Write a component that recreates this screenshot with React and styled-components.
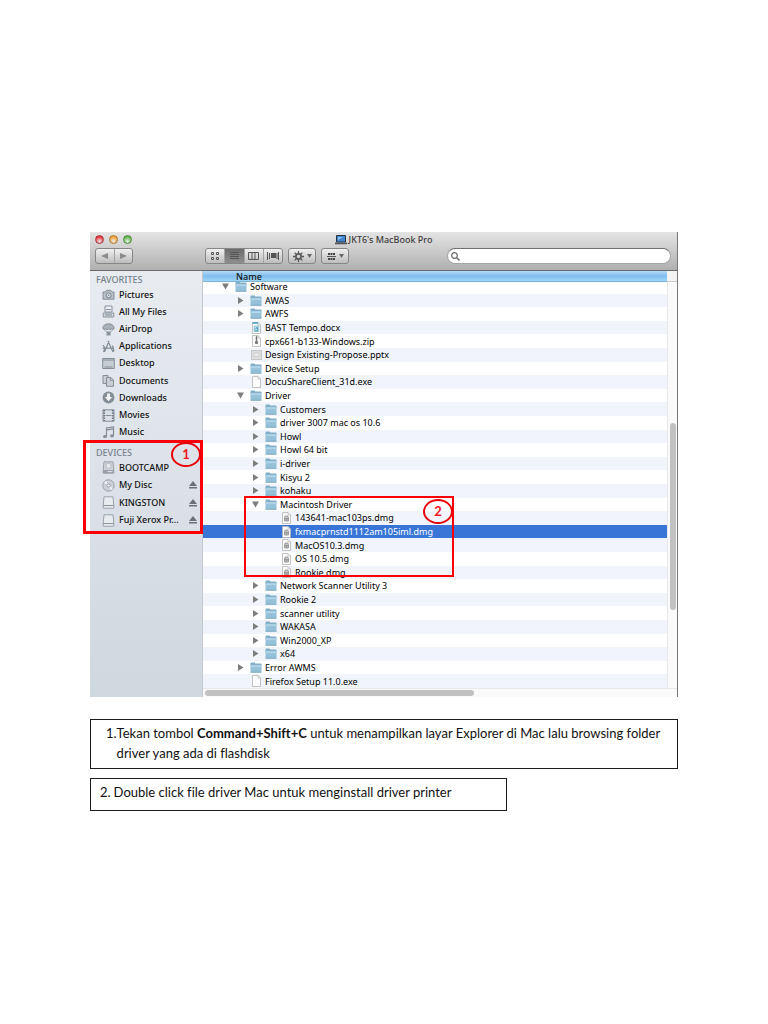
import React from "react";
import styled, { createGlobalStyle, css } from "styled-components";

const Global = createGlobalStyle`
  * { box-sizing: border-box; }
  body { margin: 0; background: #fff; color: #111; font-family: "Noto Sans", sans-serif; }
  button { border: 0; padding: 0; margin: 0; background: none; font: inherit; color: inherit; }
  svg { display: block; flex: none; }
`;

const Page = styled.main`
  padding: 232px 90px 200px;
`;

const Window = styled.section`
  border-right: 1px solid #777;
`;

const Toolbar = styled.header`
  height: 39px;
  padding-bottom: 6px;
  display: flex;
  flex-direction: column;
  justify-content: space-between;
  background: linear-gradient(#e4e4e4, #b0b0b0);
  border-bottom: 1px solid #6b6b6b;
`;

const TitleBar = styled.div`
  display: grid;
  grid-template-columns: 1fr auto 1fr;
  align-items: center;
  height: 15px;
`;

const Lights = styled.div`
  display: flex;
  gap: 5px;
  padding-left: 5px;
`;

const Light = styled.button`
  width: 9px;
  height: 9px;
  border-radius: 50%;
  border: 1px solid ${(p) => p.$edge};
  background: radial-gradient(circle at 50% 75%, #fff8, ${(p) => p.$fill} 70%);
`;

const Title = styled.h1`
  margin: 0;
  display: flex;
  align-items: center;
  gap: 2px;
  font-size: 9px;
  line-height: 14px;
  font-weight: 500;
  color: #3c3c3c;
`;

const Tools = styled.div`
  display: flex;
  align-items: center;
  height: 16px;
  padding: 0 6px 0 5px;
`;

const Group = styled.div`
  display: flex;
  flex: none;
  height: 16px;
  width: ${(p) => p.$w}px;
  margin-right: ${(p) => p.$after}px;
  border: 1px solid #868686;
  border-radius: 3px;
  overflow: hidden;
  background: linear-gradient(#f0f0f0, #bdbdbd);
`;

const Tool = styled.button`
  flex: 1;
  display: flex;
  align-items: center;
  justify-content: center;
  gap: 3px;
  color: #4a4a4a;
  & + & { border-left: 1px solid #a4a4a4; }
  ${(p) => p.$on && css`background: linear-gradient(#6c6c6c, #8e8e8e);`}
`;

const Search = styled.label`
  flex: 1;
  display: flex;
  align-items: center;
  gap: 3px;
  height: 16px;
  padding: 0 3px;
  background: #fff;
  border: 1px solid #a6a6a6;
  border-top-color: #707070;
  border-radius: 8px;
  input { flex: 1; min-width: 0; border: 0; outline: 0; background: none; font-size: 9px; padding: 0; height: 12px; }
`;

const Body = styled.div`
  display: grid;
  grid-template-columns: 113px 1fr;
`;

const Sidebar = styled.nav`
  background: linear-gradient(#e8ecf1, #dadfe7 60%, #cfd7df);
  border-right: 1px solid #c4c8ce;
`;

const Places = styled.section`
  position: relative;
  padding-top: ${(p) => p.$top}px;
`;

const Heading = styled.h2`
  margin: 0;
  padding-left: 6px;
  font-size: 9px;
  line-height: 12px;
  font-weight: 500;
  color: #76808c;
`;

const PlaceList = styled.ul`
  list-style: none;
  margin: 0;
  padding: 0;
  display: grid;
  grid-auto-rows: 1fr;
  min-height: ${(p) => p.$h}px;
`;

const Place = styled.li`
  display: flex;
  align-items: center;
  padding: 0 5px 0 12px;
  a {
    flex: 1;
    display: flex;
    align-items: center;
    gap: 4px;
    font-size: 9px;
    line-height: 14px;
    font-weight: 500;
    color: #111;
    text-decoration: none;
    white-space: nowrap;
  }
`;

const Files = styled.section`
  display: grid;
  grid-template-columns: 1fr 10px;
  grid-template-rows: 11px auto 9px;
`;

const Column = styled.button`
  position: relative;
  z-index: 1;
  padding-left: 33px;
  text-align: left;
  font-size: 9px;
  line-height: 9px;
  font-weight: 500;
  color: #111;
  background: linear-gradient(#b4dcf8, #7fbdec 50%, #9fd6fa);
  border-bottom: 1px solid #80b4d4;
`;

const Corner = styled.div`
  background: #f3f3f3;
  border-bottom: 1px solid #ccc;
`;

const Tree = styled.ul`
  list-style: none;
  margin: -2px 0 0;
  padding: 0;
  display: grid;
  grid-auto-rows: 1fr;
  min-height: 408px;
`;

const Row = styled.li`
  position: relative;
  display: flex;
  align-items: center;
  gap: 3px;
  min-height: 0;
  height: 100%;
  padding-left: ${(p) => 16 + p.$level * 15}px;
  font-size: 9px;
  line-height: 13px;
  font-weight: 400;
  white-space: nowrap;
  color: ${(p) => (p.$selected ? "#fff" : "#000")};
  background: ${(p) => (p.$selected ? "#3875d7" : "#fff")};
  &:nth-child(even) { background: ${(p) => (p.$selected ? "#3875d7" : "#f1f5fb")}; }
`;

const Toggle = styled.span`
  flex: none;
  width: 13px;
  display: flex;
  justify-content: center;
`;

const IconSlot = styled.span`
  flex: none;
  width: 12px;
  display: flex;
  justify-content: center;
`;

const VTrack = styled.div`
  display: flex;
  justify-content: center;
  padding-top: 141px;
  background: #fafafa;
  border-left: 1px solid #e8e8e8;
`;

const VThumb = styled.div`
  width: 6px;
  height: 187px;
  border-radius: 3px;
  background: #c1c1c1;
`;

const HTrack = styled.div`
  grid-column: 1 / -1;
  display: flex;
  align-items: center;
  padding-left: 2px;
  background: #fafafa;
  border-top: 1px solid #e8e8e8;
`;

const HThumb = styled.div`
  width: 57%;
  height: 6px;
  border-radius: 3px;
  background: #c1c1c1;
`;

const Callout = styled.div`
  position: absolute;
  z-index: 2;
  left: ${(p) => p.$left}px;
  top: ${(p) => p.$top}px;
  width: ${(p) => p.$w}px;
  height: ${(p) => p.$h}px;
  border: ${(p) => p.$line}px solid #fb0007;
  pointer-events: none;
`;

const Badge = styled.span`
  position: absolute;
  right: -1px;
  top: ${(p) => p.$top}px;
  width: 30px;
  height: 25px;
  border: 2px solid #e80008;
  border-radius: 50%;
  text-align: center;
  font: 700 13px/21px Lato, sans-serif;
  color: #f0141c;
`;

const Notes = styled.ol`
  list-style: none;
  margin: 22px 0 0;
  padding: 0;
  display: grid;
  gap: 9px;
  font-family: Lato, sans-serif;
  font-size: 13px;
  line-height: 20px;
  font-variant-ligatures: none;
  color: #111;
`;

const Note = styled.li`
  display: flex;
  gap: ${(p) => p.$gap}px;
  width: ${(p) => p.$w};
  min-height: ${(p) => p.$h}px;
  padding: 3px 8px 3px ${(p) => p.$pad}px;
  border: 1px solid #1c1c1c;
  p { margin: 0; }
`;

const Folder = () => (
  <svg width="12" height="11" viewBox="0 0 12 11">
    <path d="M.5 1.300Q.5.500 1.200.5H4.500l.8 1H10.800q.7 0 .7.700V4H.5Z" fill="#7fadc8" />
    <path d="M.5 2.800h11v7.500H.5Z" fill="#94c0d9" />
    <path d="M.5 3.200h11v2H.5Z" fill="#b0d3e5" />
    <path d="M.5 10.300h11" stroke="#6d9db9" strokeWidth=".8" />
  </svg>
);

const Doc = ({ kind }) => (
  <svg width="9" height="12" viewBox="0 0 9 12">
    <path d="M.5.5H6L8.500 3v8.500H.5Z" fill="#fbfbfb" stroke="#b5b5b5" strokeWidth=".8" />
    <path d="M6 .5V3h2.500" fill="#e6e6e6" stroke="#b5b5b5" strokeWidth=".6" />
    {kind === "docx" && (
      <g fill="none" stroke="#3b9dbb">
        <path d="M.5 1H6" strokeWidth="1.400" />
        <path d="M2.200 4h4.600v5.500H2.200Z" strokeWidth=".6" />
        <path d="M3.500 5.300h2V8.500H3.600a.9.900 0 0 1 0-1.800H5.500" strokeWidth=".9" />
      </g>
    )}
    {kind === "zip" && <path d="M4.500 1v5M3.600 2h1.800M3.600 3.500h1.800M3.600 5h1.800M3.500 6.500h2v2h-2Z" stroke="#666" strokeWidth=".8" fill="#888" />}
    {kind === "dmg" && (
      <g fill="none" stroke="#7b7b7b">
        <path d="M2.600 5.500 3.200 4h2.600l.6 1.500V9H2.600Z" fill="#ccc" strokeWidth=".7" />
        <path d="M2.600 6.700h3.800M4 7.900h1.200" strokeWidth=".8" />
      </g>
    )}
  </svg>
);

const Slide = () => (
  <svg width="11" height="10" viewBox="0 0 11 10">
    <rect x=".5" y=".5" width="10" height="9" fill="#dedede" stroke="#c6c6c6" />
    <path d="M3 3h5v3.500H3Z" fill="#ececec" stroke="#c0c0c0" strokeWidth=".6" />
  </svg>
);

const Arrow = ({ open }) => (
  <svg width="7" height="7" viewBox="0 0 7 7" fill="#7d7d7d">
    <path d={open ? "M0 .5h7L3.500 6.500Z" : "M1 0v7L6.500 3.500Z"} />
  </svg>
);

const Caret = () => (
  <svg width="5" height="4" viewBox="0 0 5 4"><path d="M0 0h5L2.500 4Z" fill="#666" /></svg>
);

const Eject = () => (
  <svg width="8" height="8" viewBox="0 0 8 8" fill="#6b7178"><path d="M4 0 8 5H0ZM0 6h8v1.500H0Z" /></svg>
);

const drive = (
  <>
    <path d="M2 .8h9l.8 8.700v2.700H1.200V9.500Z" fill="#e9ecef" stroke="#9ba1a9" />
    <path d="M1.200 9.500h10.600" stroke="#8d949d" />
  </>
);

const placeIcons = {
  Pictures: (
    <>
      <path d="M1 4h2.500l1.200-1.700h4L10 4h2v7.200H1Z" fill="#b9c0c8" stroke="#858d97" />
      <circle cx="6.700" cy="7.300" r="2.400" fill="#dfe4ea" stroke="#79818b" />
      <circle cx="6.700" cy="7.300" r=".8" fill="#79818b" />
    </>
  ),
  "All My Files": (
    <>
      <path d="M3 1h7v6H3Z" fill="#eef0f3" stroke="#8a929c" />
      <path d="M4 4.500h5" stroke="#8a929c" />
      <path d="M1.200 8h10.600v4H1.200Z" fill="#d5dae0" stroke="#8a929c" />
      <path d="M3 10h7" stroke="#8a929c" strokeWidth="1.200" />
    </>
  ),
  AirDrop: (
    <>
      <path d="M.8 5.500C.8 2.500 3.200.8 6.500.8s5.700 1.700 5.700 4.700Q11 7 9.500 6 8 7.300 6.500 6 5 7.300 3.500 6 2 7 .8 5.500Z" fill="#a9b0b9" stroke="#7d858f" strokeWidth=".8" />
      <path d="M2 6.500 5 9.500M11 6.500 8 9.500" stroke="#7d858f" strokeWidth=".7" />
      <path d="M4.500 8.500h4v4h-4Z" fill="#8b939d" />
    </>
  ),
  Applications: (
    <g fill="none" stroke="#858d97" strokeWidth="1.200">
      <path d="M7 1 2.500 12M6 1l5 11M.5 8.200h11.500M1 5l2 3-1.500 4M10.500 5.500l1.500 6" />
    </g>
  ),
  Desktop: (
    <>
      <path d="M.7 1.500h11.600v10H.7Z" fill="#c6ccd3" stroke="#868e98" />
      <path d="M1 3h11M2.500 10h8" stroke="#868e98" strokeWidth="1.200" />
    </>
  ),
  Documents: (
    <g fill="#c9ced5" stroke="#868e98">
      <path d="M1 1.500h5v8H1Z" /><path d="M4.500 3.500H9l2.500 2.500v6.300h-7Z" /><path d="M8.500 3.500v3h3" fill="none" strokeWidth=".8" />
    </g>
  ),
  Downloads: (
    <>
      <circle cx="6.500" cy="6.500" r="5.900" fill="#858d97" />
      <path d="M5 2.500h3V6h2.200L6.500 10.300 2.800 6H5Z" fill="#f1f3f6" />
    </>
  ),
  Movies: (
    <>
      <path d="M1 .8h11v11.400H1Z" fill="#dbe0e6" stroke="#858d97" />
      <path d="M2.200 1v11M10.800 1v11" stroke="#6f7781" strokeWidth="1.800" strokeDasharray="1.500 1" />
      <path d="M3.500 6.500h6" stroke="#858d97" />
    </>
  ),
  Music: (
    <>
      <path d="M4.500 10V2l7-1v8.500M4.500 3.800l7-1" fill="none" stroke="#858d97" strokeWidth="1.200" />
      <ellipse cx="3" cy="10.500" rx="2" ry="1.600" fill="#858d97" /><ellipse cx="10" cy="9.800" rx="2" ry="1.600" fill="#858d97" />
    </>
  ),
  BOOTCAMP: (
    <>
      <path d="M2 .8h9l.8 8.200v3.200H1.200V9Z" fill="#cfd3d8" stroke="#9ba1a9" />
      <circle cx="6.500" cy="4.800" r="2.700" fill="#e5e8eb" stroke="#b4b9c0" />
      <path d="M1.200 9h10.600v3.200H1.200Z" fill="#989fa8" /><path d="M5.500 10.600h5" stroke="#e3e6ea" />
    </>
  ),
  "My Disc": (
    <>
      <circle cx="6.500" cy="6.500" r="5.700" fill="#cdd1d7" stroke="#989fa8" />
      <path d="M6.500 6.500 2 3.500 4 1.800ZM6.500 6.500 11 9.500 9 11.200Z" fill="#eef0f2" />
      <circle cx="6.500" cy="6.500" r="1.600" fill="#f4f5f7" stroke="#989fa8" />
    </>
  ),
  KINGSTON: drive,
  "Fuji Xerox Pr...": drive,
};

const favorites = ["Pictures", "All My Files", "AirDrop", "Applications", "Desktop", "Documents", "Downloads", "Movies", "Music"];
const devices = ["BOOTCAMP", "My Disc", "KINGSTON", "Fuji Xerox Pr..."];

const files = [
  [0, "open", "Software"],
  [1, "folder", "AWAS"],
  [1, "folder", "AWFS"],
  [1, "docx", "BAST Tempo.docx"],
  [1, "zip", "cpx661-b133-Windows.zip"],
  [1, "pptx", "Design Existing-Propose.pptx"],
  [1, "folder", "Device Setup"],
  [1, "exe", "DocuShareClient_31d.exe"],
  [1, "open", "Driver"],
  [2, "folder", "Customers"],
  [2, "folder", "driver 3007 mac os 10.6"],
  [2, "folder", "Howl"],
  [2, "folder", "Howl 64 bit"],
  [2, "folder", "i-driver"],
  [2, "folder", "Kisyu 2"],
  [2, "folder", "kohaku"],
  [2, "open", "Macintosh Driver"],
  [3, "dmg", "143641-mac103ps.dmg"],
  [3, "dmg", "fxmacprnstd1112am105iml.dmg"],
  [3, "dmg", "MacOS10.3.dmg"],
  [3, "dmg", "OS 10.5.dmg"],
  [3, "dmg", "Rookie.dmg"],
  [2, "folder", "Network Scanner Utility 3"],
  [2, "folder", "Rookie 2"],
  [2, "folder", "scanner utility"],
  [2, "folder", "WAKASA"],
  [2, "folder", "Win2000_XP"],
  [2, "folder", "x64"],
  [1, "folder", "Error AWMS"],
  [1, "exe", "Firefox Setup 11.0.exe"],
];

const PlaceItem = ({ name, ejectable }) => (
  <Place>
    <a href="#">
      <svg width="13" height="13" viewBox="0 0 13 13">{placeIcons[name]}</svg>
      {name}
    </a>
    {ejectable && <button aria-label={`Eject ${name}`}><Eject /></button>}
  </Place>
);

const FileRow = ({ level, kind, name, children }) => {
  const isFolder = kind === "open" || kind === "folder";
  return (
    <Row $level={level} $selected={name.startsWith("fxmac")}>
      <Toggle>
        {isFolder && <button aria-label={`Toggle ${name}`}><Arrow open={kind === "open"} /></button>}
      </Toggle>
      <IconSlot>{isFolder ? <Folder /> : kind === "pptx" ? <Slide /> : <Doc kind={kind} />}</IconSlot>
      <span>{name}</span>
      {children}
    </Row>
  );
};

export default function App() {
  return (
    <Page>
      <Global />
      <Window>
        <Toolbar>
          <TitleBar>
            <Lights>
              <Light aria-label="Close" $edge="#a83a3a" $fill="#e8343a" />
              <Light aria-label="Minimize" $edge="#b5762c" $fill="#f0a136" />
              <Light aria-label="Zoom" $edge="#4b8a3e" $fill="#5fb548" />
            </Lights>
            <Title>
              <svg width="12" height="10" viewBox="0 0 12 10">
                <path d="M1.500.5h9v6.500h-9Z" fill="#3f86cf" stroke="#28323f" />
                <path d="M3 2h5L3 5Z" fill="#8fc1ee" />
                <path d="M0 7.500h12v1.800H0Z" fill="#4d545c" />
              </svg>
              JKT6's MacBook Pro
            </Title>
          </TitleBar>
          <Tools>
            <Group $w={38} $after={72}>
              <Tool aria-label="Back"><svg width="7" height="6" viewBox="0 0 7 6"><path d="M7 0v6L0 3Z" fill="#8b8b8b" /></svg></Tool>
              <Tool aria-label="Forward"><svg width="7" height="6" viewBox="0 0 7 6"><path d="M0 0v6l7-3Z" fill="#8b8b8b" /></svg></Tool>
            </Group>
            <Group $w={78} $after={5}>
              <Tool aria-label="Icon view">
                <svg width="9" height="8" viewBox="0 0 9 8" fill="none" stroke="#555"><path d="M.5.5h2v2h-2ZM5.500.5h2v2h-2ZM.5 5.500h2v2h-2ZM5.500 5.500h2v2h-2Z" /></svg>
              </Tool>
              <Tool aria-label="List view" $on>
                <svg width="9" height="8" viewBox="0 0 9 8" stroke="#555"><path d="M0 .5h9M0 2.500h9M0 4.500h9M0 6.500h9" /></svg>
              </Tool>
              <Tool aria-label="Column view">
                <svg width="11" height="8" viewBox="0 0 11 8" fill="none" stroke="#555"><path d="M.5.5h10v7H.5ZM4 1v6M7 1v6" /></svg>
              </Tool>
              <Tool aria-label="Cover flow">
                <svg width="12" height="8" viewBox="0 0 12 8" fill="#555"><path d="M0 0h1v8H0ZM2 1h1v6H2ZM4 1h5v5H4ZM9.500 1h1v6h-1ZM11 0h1v8h-1Z" /></svg>
              </Tool>
            </Group>
            <Group $w={28} $after={5}>
              <Tool aria-label="Action">
                <svg width="11" height="11" viewBox="0 0 11 11" fill="none" stroke="#555">
                  <circle cx="5.500" cy="5.500" r="2.600" strokeWidth="1.600" />
                  <path d="M5.500 0v2.500M5.500 8.500V11M0 5.500h2.500M8.500 5.500H11M1.600 1.600l1.800 1.800M7.600 7.600l1.800 1.800M9.400 1.600 7.600 3.400M3.400 7.600 1.600 9.400" strokeWidth="1.300" />
                </svg>
                <Caret />
              </Tool>
            </Group>
            <Group $w={28} $after={98}>
              <Tool aria-label="Arrange">
                <svg width="9" height="9" viewBox="0 0 9 9"><path d="M0 4.500h9" stroke="#555" /><path d="M1 2h7M1 7h7" stroke="#444" strokeWidth="2" strokeDasharray="2 .5" /></svg>
                <Caret />
              </Tool>
            </Group>
            <Search>
              <svg width="9" height="9" viewBox="0 0 9 9" fill="none" stroke="#666"><circle cx="3.500" cy="3.500" r="2.800" strokeWidth="1.200" /><path d="m5.500 5.500 3 3" strokeWidth="1.500" /></svg>
              <input type="search" aria-label="Search" />
            </Search>
          </Tools>
        </Toolbar>
        <Body>
          <Sidebar>
            <Places $top={3}>
              <Heading>FAVORITES</Heading>
              <PlaceList $h={155}>{favorites.map((n) => <PlaceItem key={n} name={n} />)}</PlaceList>
            </Places>
            <Places $top={6}>
              <Heading>DEVICES</Heading>
              <PlaceList $h={70}>{devices.map((n, i) => <PlaceItem key={n} name={n} ejectable={i > 0} />)}</PlaceList>
              <Callout $line={3} $left={-7} $top={-1} $w={120} $h={94}><Badge $top={-1}>1</Badge></Callout>
            </Places>
          </Sidebar>
          <Files>
            <Column>Name</Column>
            <Corner />
            <Tree>
              {files.map(([level, kind, name]) => (
                <FileRow key={name} level={level} kind={kind} name={name}>
                  {name === "Macintosh Driver" && (
                    <Callout $line={2} $left={41} $top={-2} $w={210} $h={81}><Badge $top={1}>2</Badge></Callout>
                  )}
                </FileRow>
              ))}
            </Tree>
            <VTrack><VThumb /></VTrack>
            <HTrack><HThumb /></HTrack>
          </Files>
        </Body>
      </Window>
      <Notes>
        <Note $w="100%" $h={50} $pad={15} $gap={0}>
          <span>1.</span>
          <p>Tekan tombol <strong>Command+Shift+C</strong> untuk menampilkan layar Explorer di Mac lalu browsing folder driver yang ada di flashdisk</p>
        </Note>
        <Note $w="71%" $h={33} $pad={9} $gap={3}>
          <span>2.</span>
          <p>Double click file driver Mac untuk menginstall driver printer</p>
        </Note>
      </Notes>
    </Page>
  );
}
